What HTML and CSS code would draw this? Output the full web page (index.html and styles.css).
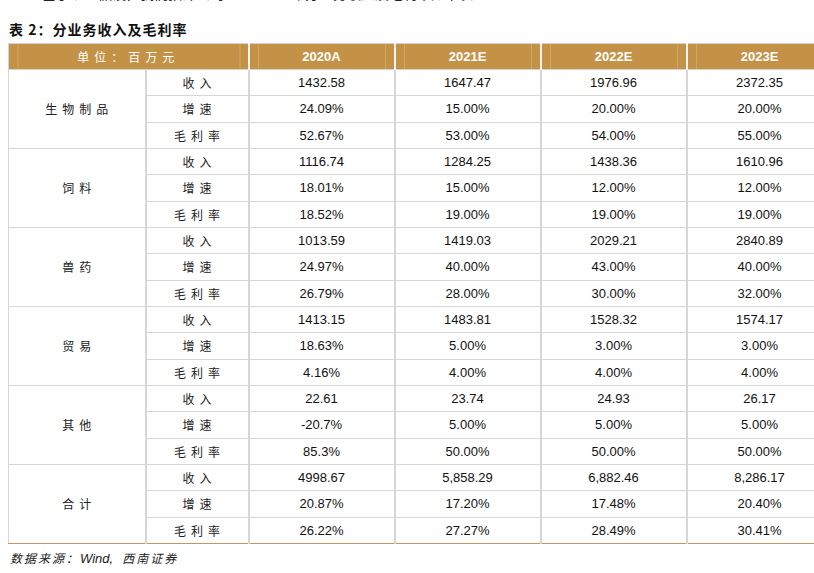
FILE: index.html
```html
<!DOCTYPE html>
<html lang="zh">
<head>
<meta charset="utf-8">
<link rel="stylesheet" href="styles.css">
</head>
<body>
<div class="page">
  <p class="intro">基于以上假设，我们预计公司2021-2023年分业务收入及毛利率如下表：</p>
  <h3 class="caption">表 2：分业务收入及毛利率</h3>
  <table class="tbl">
    <colgroup>
      <col class="c-seg"><col class="c-item"><col class="c-yr"><col class="c-yr"><col class="c-yr"><col class="c-yr">
    </colgroup>
    <thead>
      <tr>
        <th colspan="2" class="cn">单位：百万元</th>
        <th>2020A</th><th>2021E</th><th>2022E</th><th>2023E</th>
      </tr>
    </thead>
    <tbody>
      <tr><td rowspan="3" class="seg">生物制品</td><td class="item">收入</td><td>1432.58</td><td>1647.47</td><td>1976.96</td><td>2372.35</td></tr>
      <tr><td class="item">增速</td><td>24.09%</td><td>15.00%</td><td>20.00%</td><td>20.00%</td></tr>
      <tr><td class="item">毛利率</td><td>52.67%</td><td>53.00%</td><td>54.00%</td><td>55.00%</td></tr>

      <tr><td rowspan="3" class="seg">饲料</td><td class="item">收入</td><td>1116.74</td><td>1284.25</td><td>1438.36</td><td>1610.96</td></tr>
      <tr><td class="item">增速</td><td>18.01%</td><td>15.00%</td><td>12.00%</td><td>12.00%</td></tr>
      <tr><td class="item">毛利率</td><td>18.52%</td><td>19.00%</td><td>19.00%</td><td>19.00%</td></tr>

      <tr><td rowspan="3" class="seg">兽药</td><td class="item">收入</td><td>1013.59</td><td>1419.03</td><td>2029.21</td><td>2840.89</td></tr>
      <tr><td class="item">增速</td><td>24.97%</td><td>40.00%</td><td>43.00%</td><td>40.00%</td></tr>
      <tr><td class="item">毛利率</td><td>26.79%</td><td>28.00%</td><td>30.00%</td><td>32.00%</td></tr>

      <tr><td rowspan="3" class="seg">贸易</td><td class="item">收入</td><td>1413.15</td><td>1483.81</td><td>1528.32</td><td>1574.17</td></tr>
      <tr><td class="item">增速</td><td>18.63%</td><td>5.00%</td><td>3.00%</td><td>3.00%</td></tr>
      <tr><td class="item">毛利率</td><td>4.16%</td><td>4.00%</td><td>4.00%</td><td>4.00%</td></tr>

      <tr><td rowspan="3" class="seg">其他</td><td class="item">收入</td><td>22.61</td><td>23.74</td><td>24.93</td><td>26.17</td></tr>
      <tr><td class="item">增速</td><td>-20.7%</td><td>5.00%</td><td>5.00%</td><td>5.00%</td></tr>
      <tr><td class="item">毛利率</td><td>85.3%</td><td>50.00%</td><td>50.00%</td><td>50.00%</td></tr>

      <tr><td rowspan="3" class="seg">合计</td><td class="item">收入</td><td>4998.67</td><td>5,858.29</td><td>6,882.46</td><td>8,286.17</td></tr>
      <tr><td class="item">增速</td><td>20.87%</td><td>17.20%</td><td>17.48%</td><td>20.40%</td></tr>
      <tr><td class="item">毛利率</td><td>26.22%</td><td>27.27%</td><td>28.49%</td><td>30.41%</td></tr>
    </tbody>
  </table>
  <p class="source">数据来源：<span class="lat">Wind,</span>西南证券</p>
</div>
</body>
</html>
```

FILE: styles.css
```css
html, body {
  margin: 0;
  padding: 0;
  background: #ffffff;
  overflow: hidden;
}
.page {
  width: 840px;
  padding-left: 8px;
  font-family: "Liberation Sans", Arial, "Noto Sans CJK SC", sans-serif;
  color: #111;
}
.intro {
  margin: -17px 0 0 34px;
  font-size: 14px;
  line-height: 20px;
  font-family: "Noto Sans CJK SC", sans-serif;
  color: #222;
  white-space: nowrap;
}
.caption {
  margin: 16px 0 0 1px;
  font-size: 14px;
  line-height: 20px;
  font-weight: 700;
  font-family: "Noto Sans CJK SC", sans-serif;
  color: #111;
  letter-spacing: 1px;
}
.tbl {
  margin-top: 4px;
  border-collapse: collapse;
  table-layout: fixed;
  width: 824px;
}
.c-seg { width: 137px; }
.c-item { width: 103px; }
.c-yr { width: 146px; }
.tbl th {
  height: 25px;
  padding: 0;
  color: #ffffff;
  font-size: 13px;
  font-weight: 700;
  text-align: center;
  background:
    linear-gradient(to right,
      transparent 8px, #d4a664 8px, #d4a664 9px, transparent 9px,
      transparent calc(100% - 9px), #d4a664 calc(100% - 9px), #d4a664 calc(100% - 8px), transparent calc(100% - 8px)),
    #c49247;
  border-top: 1px solid #d3d3d3;
  border-bottom: 1px solid #d3d3d3;
  border-left: 2px solid #f4f4f4;
  border-right: 2px solid #f4f4f4;
}
.tbl th:first-child { border-left: 1px solid #d3d3d3; }
.tbl th.cn {
  font-family: "Noto Sans CJK SC", sans-serif;
  font-weight: 400;
  font-size: 12px;
  letter-spacing: 5px;
}
.tbl td {
  padding: 0;
  height: 25.33px;
  text-align: center;
  font-size: 13px;
  color: #111;
  border: 2px solid #d6d6d6;
  border-top-width: 1px;
  border-bottom-width: 1px;
}
.tbl td.seg, .tbl td.item {
  font-family: "Noto Sans CJK SC", sans-serif;
  font-size: 12px;
  letter-spacing: 5px;
  text-indent: 5px;
  color: #222;
}
.tbl td.seg { border-left-width: 1px; }
.tbl tbody tr:last-child td,
.tbl tbody tr:nth-last-child(3) td.seg { border-bottom: 1px solid #c8955a; }
.source {
  margin: 5px 0 0 2px;
  font-size: 12px;
  line-height: 18px;
  font-style: italic;
  font-family: "Noto Sans CJK SC", sans-serif;
  color: #222;
  letter-spacing: 2px;
}
.source .lat {
  font-family: "Liberation Sans", Arial, sans-serif;
  letter-spacing: 0;
  font-size: 13px;
  margin-right: 9px;
}
```
